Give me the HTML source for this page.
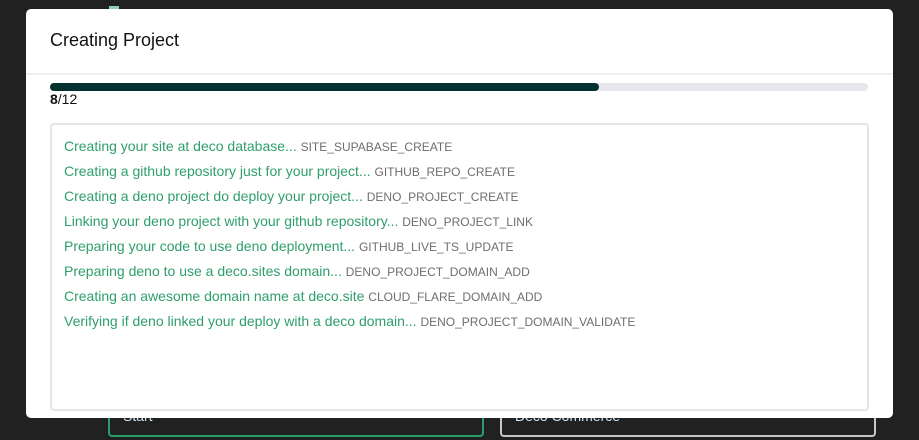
<!DOCTYPE html>
<html><head><style>
body{margin:0;width:919px;height:440px;background:#212121;position:relative;overflow:hidden;font-family:"Liberation Sans",sans-serif}
.bg{position:absolute;top:380px;height:57px;border-radius:4px;box-sizing:border-box}
.bg span{position:absolute;left:13px;top:28px;font-size:14px;color:#cfe8f5}
.modal{position:absolute;left:26px;top:9px;width:867px;height:409px;background:#fff;border-radius:5px}
h1{position:absolute;left:24px;top:21px;margin:0;font-size:18px;font-weight:normal;color:#111}
.hr{position:absolute;left:0;right:0;top:64px;height:2px;background:#f0f0f3}
.bar{position:absolute;left:24px;top:74px;width:818px;height:8px;background:#e6e6ec;border-radius:4px}
.fill{width:549px;height:8px;background:#04302f;border-radius:4px}
.cnt{position:absolute;left:24px;top:82px;font-size:14px;color:#111}
.box{position:absolute;left:24px;top:114px;width:819px;height:288px;border:2px solid #e4e4ea;border-radius:4px;box-sizing:border-box;padding:11px 12px 10px}
.l{font-size:14px;color:#2e9e6c;height:25px;line-height:20px;white-space:nowrap}
.l small{font-size:12px;color:#6e6e6e}
</style></head><body>
<div style="position:absolute;left:109px;top:6px;width:10px;height:4px;background:#8fd1b8"></div>
<div class="bg" style="left:108px;width:376px;border:2px solid #2a9d6a;border-top:none"><span>Start</span></div>
<div class="bg" style="left:500px;width:376px;border:2px solid #c8c8c8;border-top:none"><span>Deco Commerce</span></div>
<div class="modal">
<h1>Creating Project</h1>
<div class="hr"></div>
<div class="bar"><div class="fill"></div></div>
<div class="cnt"><b>8</b>/12</div>
<div class="box">
<div class="l">Creating your site at deco database... <small>SITE_SUPABASE_CREATE</small></div>
<div class="l">Creating a github repository just for your project... <small>GITHUB_REPO_CREATE</small></div>
<div class="l">Creating a deno project do deploy your project... <small>DENO_PROJECT_CREATE</small></div>
<div class="l">Linking your deno project with your github repository... <small>DENO_PROJECT_LINK</small></div>
<div class="l">Preparing your code to use deno deployment... <small>GITHUB_LIVE_TS_UPDATE</small></div>
<div class="l">Preparing deno to use a deco.sites domain... <small>DENO_PROJECT_DOMAIN_ADD</small></div>
<div class="l">Creating an awesome domain name at deco.site <small>CLOUD_FLARE_DOMAIN_ADD</small></div>
<div class="l">Verifying if deno linked your deploy with a deco domain... <small>DENO_PROJECT_DOMAIN_VALIDATE</small></div>
</div>
</div>
</body></html>
